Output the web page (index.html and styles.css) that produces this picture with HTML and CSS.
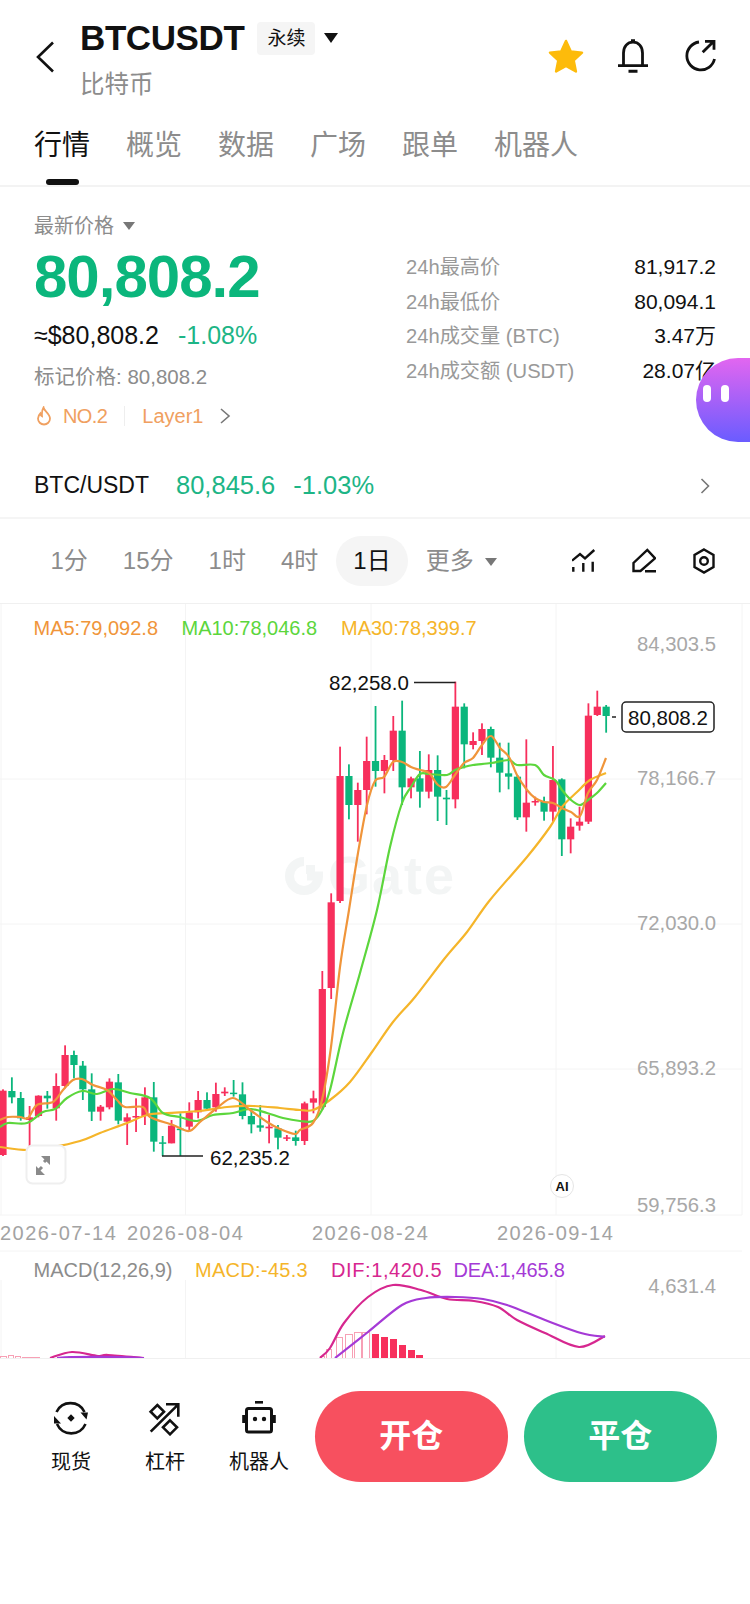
FILE: index.html
```html
<!DOCTYPE html>
<html lang="zh-CN">
<head>
  <meta charset="UTF-8">
  <meta name="viewport" content="width=device-width, initial-scale=1.0">
  <title>BTCUSDT</title>
  <link rel="stylesheet" href="styles.css">
</head>
<body>

  <div class="topBar">
    <svg class="backIcon" width="20" height="32" viewBox="0 0 20 32"><path d="M18 1.500 3 16l15 14.500" fill="none" stroke="#111" stroke-width="2.600"/></svg>
    <div class="titleBox">
      <div class="titleRow">
        <h1 class="symbol">BTCUSDT</h1>
        <span class="badge">永续</span>
        <span class="caret"></span>
      </div>
      <div class="subName">比特币</div>
    </div>
    <div class="topActions">
      <svg width="38" height="36" viewBox="0 0 38 36"><path d="M19 3l4.800 10.400 11.200 1.300-8.300 7.700 2.200 11.100L19 28l-9.900 5.500 2.200-11.100L3 14.700l11.200-1.300z" fill="#fdbb0b" stroke="#fdbb0b" stroke-width="2.500" stroke-linejoin="round"/></svg>
      <svg width="32" height="36" viewBox="0 0 32 36"><path d="M6.500 27.500V15C6.500 8.500 10.500 4.200 16 4.200S25.500 8.500 25.500 15v12.500M1 27.700h30" fill="none" stroke="#111" stroke-width="2.800"/><path d="M14 1.200h4v3h-4zM11.500 31.800h9v3h-9z" fill="#111"/></svg>
      <svg class="shareIcon" width="34" height="34" viewBox="0 0 34 34"><path d="M15 3A14 14 0 1 0 30.500 20M18.700 13.300 29.300 2.700M21 2.300h9v8.400" fill="none" stroke="#111" stroke-width="2.800"/></svg>
    </div>
  </div>

  <div class="tabs">
    <div class="tab on">行情<span class="tabLine"></span></div>
    <div class="tab">概览</div>
    <div class="tab">数据</div>
    <div class="tab">广场</div>
    <div class="tab">跟单</div>
    <div class="tab">机器人</div>
  </div>

  <div class="priceBox">
    <div class="priceLeft">
      <div class="priceLabel">最新价格<span class="caret small"></span></div>
      <div class="bigPrice">80,808.2</div>
      <div class="usdRow"><span>≈$80,808.2</span><span class="green">-1.08%</span></div>
      <div class="markPrice">标记价格: 80,808.2</div>
      <div class="rankRow">
        <svg width="18" height="20" viewBox="0 0 18 20"><path d="M8.500 1.500c.5 3.500 6.500 6 6.500 11a6 6 0 0 1-12 0c0-2.500 1.300-4 2.300-5 .2 1.500.8 2.300 1.700 2.700C6.700 7 7 4 8.500 1.500z" fill="none" stroke="#f0a060" stroke-width="1.800"/></svg>
        <span class="rankNo">NO.2</span>
        <span class="rankLine"></span>
        <span>Layer1</span>
        <svg class="rankArrow" width="12" height="16" viewBox="0 0 12 16"><path d="M2 1l8 7-8 7" fill="none" stroke="#777" stroke-width="1.600"/></svg>
      </div>
    </div>
    <ul class="stats">
      <li><span>24h最高价</span><b>81,917.2</b></li>
      <li><span>24h最低价</span><b>80,094.1</b></li>
      <li><span>24h成交量 (BTC)</span><b>3.47万</b></li>
      <li><span>24h成交额 (USDT)</span><b>28.07亿</b></li>
    </ul>
    <div class="bubble"><i></i><i></i></div>
  </div>

  <div class="pairRow">
    <span class="pairName">BTC/USDT</span>
    <span class="green">80,845.6</span>
    <span class="green">-1.03%</span>
    <svg class="pairArrow" width="10" height="16" viewBox="0 0 10 16"><path d="M1.500 1l7 7-7 7" fill="none" stroke="#777" stroke-width="1.600"/></svg>
  </div>

  <div class="periods">
    <span class="period">1分</span>
    <span class="period">15分</span>
    <span class="period">1时</span>
    <span class="period">4时</span>
    <span class="period on">1日</span>
    <span class="period">更多<span class="caret small"></span></span>
    <div class="tools">
      <svg width="24" height="26" viewBox="0 0 24 26"><path d="M0 12.700 8 6l5 4.300L22.300 2" fill="none" stroke="#111" stroke-width="2.400"/><path d="M1.300 19v4.700M11.300 15v8.700M20.700 13.700v10" fill="none" stroke="#111" stroke-width="2.400"/></svg>
      <svg width="24" height="26" viewBox="0 0 24 26"><path d="M1.500 23v-8L15.300 2l7.700 8.300L8.500 23zM13 23.300h11" fill="none" stroke="#111" stroke-width="2.400"/></svg>
      <svg width="24" height="26" viewBox="0 0 24 26"><path d="M12 1.500l9.500 5.500v12L12 24.500 2.500 19V7z" fill="none" stroke="#111" stroke-width="2.400"/><circle cx="12" cy="13" r="3.800" fill="none" stroke="#111" stroke-width="2.400"/></svg>
    </div>
  </div>

  <!-- 차트: 좌표는 페이지 기준 -->
  <svg class="chart" id="chart" width="750" height="754" viewBox="0 604 750 754">
    <g class="grid">
      <path d="M0 779H742M0 924H742M0 1069H742M0 1215H742M1 604V1215M185.500 604V1215M371 604V1215M556 604V1215M742 604V1215M0 1251H742M185.500 1280V1358M371 1280V1358M556 1280V1358M1 1280V1358"/>
    </g>
    <g class="mark">
      <path d="M304 861.500A14.500 14.500 0 1 0 318.500 876H307"/>
      <rect x="306" y="865" width="9" height="9"/>
    </g>
    <text class="markText" x="328" y="894">Gate</text>

    <g id="bars"></g>
    <g id="candles"></g>
    <g id="lines"></g>

    <path class="leader" d="M414 682.500H455.500M162 1156H203"/>
    <text class="tag" x="329" y="690">82,258.0</text>
    <text class="tag" x="210" y="1165">62,235.2</text>

    <path class="leader" d="M612 717h4"/>
    <rect class="lastBox" x="622" y="702" width="92" height="30" rx="4"/>
    <text class="tag" x="628" y="724.500">80,808.2</text>

    <text class="axis" x="716" y="651">84,303.5</text>
    <text class="axis" x="716" y="785">78,166.7</text>
    <text class="axis" x="716" y="930">72,030.0</text>
    <text class="axis" x="716" y="1075">65,893.2</text>
    <text class="axis" x="716" y="1212">59,756.3</text>
    <text class="axis" x="716" y="1293">4,631.4</text>

    <text class="maText c1" x="33.500" y="635">MA5:79,092.8</text>
    <text class="maText c2" x="181.500" y="635">MA10:78,046.8</text>
    <text class="maText c3" x="341" y="635">MA30:78,399.7</text>

    <text class="date" x="0" y="1240">2026-07-14</text>
    <text class="date" x="127" y="1240">2026-08-04</text>
    <text class="date" x="312" y="1240">2026-08-24</text>
    <text class="date" x="497" y="1240">2026-09-14</text>

    <text class="maText grey" x="33.500" y="1277">MACD(12,26,9)</text>
    <text class="maText c3 wide" x="195" y="1277">MACD:-45.3</text>
    <text class="maText c4 wide2" x="331" y="1277">DIF:1,420.5</text>
    <text class="maText c5 tight" x="453.500" y="1277">DEA:1,465.8</text>

    <rect class="expandBox" x="26.500" y="1145.500" width="39" height="38" rx="6"/>
    <path class="expand" d="M37 1172l5-5M49 1157l-5 5"/>
    <path class="expandTip" d="M36 1166v9h9zM50 1156h-9l9 9z"/>

    <circle class="aiBox" cx="562" cy="1186" r="11.500"/>
    <text class="aiText" x="562" y="1191">AI</text>
  </svg>

  <div class="bottomBar">
    <div class="tool">
      <svg width="36" height="36" viewBox="0 0 36 36"><path d="M3.500 12A15.500 15.500 0 0 1 31.500 12M32.500 24A15.500 15.500 0 0 1 4 24" fill="none" stroke="#111" stroke-width="2.600"/><path d="M27.500 12.500h7.500l-1.500 7zM1 16l7 7.500H1zM18 14.300l3.700 3.700-3.700 3.700-3.700-3.700z" fill="#111"/></svg>
      <span>现货</span>
    </div>
    <div class="tool">
      <svg width="36" height="36" viewBox="0 0 36 36"><path d="M3.700 31.700 31.300 4.300M19 4.300h12.300v12.400" fill="none" stroke="#111" stroke-width="2.600"/><path d="M10.300 5l6.700 6.700-6.700 6.700-6.700-6.700zM23 20.300l7 7-7 7-7-7z" fill="none" stroke="#111" stroke-width="2.600"/></svg>
      <span>杠杆</span>
    </div>
    <div class="tool">
      <svg width="36" height="36" viewBox="0 0 36 36"><path d="M14 2.300h8" stroke="#111" stroke-width="2.600"/><rect x="5.500" y="8.500" width="25" height="23.500" rx="2" fill="none" stroke="#111" stroke-width="3"/><path d="M2.700 15v8M33.300 15v8" stroke="#111" stroke-width="3"/><circle cx="14" cy="19" r="2.200" fill="#111"/><circle cx="23" cy="19" r="2.200" fill="#111"/></svg>
      <span>机器人</span>
    </div>
    <div class="bigBtn red">开仓</div>
    <div class="bigBtn teal">平仓</div>
  </div>

  <script src="chart.js"></script>
</body>
</html>
```

FILE: styles.css
```css
* {
  box-sizing: border-box;
}
html, body {
  margin: 0;
  padding: 0;
}
body {
  width: 750px;
  height: 1604px;
  overflow: hidden;
  background: #fff;
  color: #111;
  font-family: "Liberation Sans", "Noto Sans CJK SC", sans-serif;
}
ul, li {
  list-style: none;
  margin: 0;
  padding: 0;
}
.green {
  color: #1db586;
}
.caret {
  display: inline-block;
  border-left: 7.5px solid transparent;
  border-right: 7.5px solid transparent;
  border-top: 10px solid #111;
}
.caret.small {
  border-left-width: 6.5px;
  border-right-width: 6.5px;
  border-top: 8px solid #777;
  margin-left: 9px;
  vertical-align: 3px;
}

/* header */
.topBar {
  display: flex;
  height: 120px;
  padding: 18px 32px 0 35px;
}
.backIcon {
  margin: 23px 25px 0 0;
}
.titleRow {
  display: flex;
  align-items: center;
  height: 40px;
}
.symbol {
  margin: 0;
  font-size: 35px;
  line-height: 40px;
  font-weight: 700;
  letter-spacing: -0.4px;
}
.badge {
  width: 58px;
  height: 33px;
  margin-left: 13px;
  border-radius: 4px;
  background: #f5f5f5;
  font-size: 19px;
  line-height: 33px;
  text-align: center;
}
.titleRow .caret {
  margin-left: 9px;
}
.subName {
  margin-top: 12px;
  font-size: 24.5px;
  line-height: 30px;
  color: #8c8c8c;
}
.topActions {
  display: flex;
  align-items: center;
  gap: 32px;
  height: 36px;
  margin: 20px 0 0 auto;
}
.shareIcon {
  margin-left: 3px;
}

.tabs {
  display: flex;
  gap: 36px;
  height: 67px;
  padding: 6px 0 0 34px;
  border-bottom: 2px solid #f3f3f3;
}
.tab {
  display: flex;
  flex-direction: column;
  align-items: center;
  font-size: 28px;
  line-height: 40px;
  color: #8c8c8c;
}
.tab.on {
  color: #111;
}
.tabLine {
  width: 33px;
  height: 6px;
  margin-top: 13px;
  border-radius: 3px;
  background: #111;
}

/* price */
.priceBox {
  position: relative;
  display: flex;
  justify-content: space-between;
  height: 267px;
  padding: 25px 34px 0;
}
.priceLabel {
  font-size: 20px;
  line-height: 28px;
  color: #8c8c8c;
}
.bigPrice {
  margin-top: 7px;
  font-size: 60px;
  line-height: 60px;
  font-weight: 700;
  letter-spacing: -1px;
  color: #0bb67c;
}
.usdRow {
  display: flex;
  gap: 19px;
  margin-top: 13px;
  font-size: 25px;
  line-height: 30px;
}
.markPrice {
  margin-top: 13px;
  font-size: 20.5px;
  line-height: 28px;
  color: #8c8c8c;
}
.rankRow {
  display: flex;
  align-items: center;
  height: 28px;
  margin-top: 11px;
  font-size: 20px;
  color: #f0a060;
}
.rankRow svg {
  margin-left: 1px;
}
.rankNo {
  margin-left: 10px;
  letter-spacing: -0.6px;
}
.rankLine {
  width: 1px;
  height: 20px;
  margin: 0 17px;
  background: #eee;
}
.rankRow .rankArrow {
  margin-left: 16px;
}
.stats {
  width: 310px;
  margin-top: 38px;
}
.stats li {
  display: flex;
  justify-content: space-between;
  height: 34.7px;
  font-size: 20.2px;
  line-height: 34.7px;
  color: #999;
}
.stats b {
  font-size: 21px;
  font-weight: 400;
  color: #111;
}
.bubble {
  position: absolute;
  top: 171px;
  right: 0;
  display: flex;
  gap: 10px;
  width: 54px;
  height: 84px;
  padding: 27px 0 0 7px;
  border-radius: 42px 0 0 42px;
  background: linear-gradient(#e266f0, #6a5cff);
}
.bubble i {
  width: 8px;
  height: 17px;
  border-radius: 4px;
  background: #fff;
}
.pairRow {
  display: flex;
  align-items: center;
  height: 65px;
  padding: 0 40px 0 34px;
  border-bottom: 2px solid #f5f5f5;
  font-size: 25.5px;
}
.pairName {
  margin-right: 27px;
  font-size: 23px;
}
.pairRow .green + .green {
  margin-left: 18px;
}
.pairArrow {
  margin-left: auto;
}

/* periods */
.periods {
  display: flex;
  align-items: center;
  height: 85px;
  padding: 0 34px 0 33px;
  border-bottom: 1px solid #f0f0f0;
  font-size: 24px;
  color: #8c8c8c;
}
.period {
  height: 50px;
  padding: 0 17.5px;
  border-radius: 25px;
  line-height: 50px;
  white-space: nowrap;
}
.period .caret {
  margin-left: 11px;
}
.period.on {
  background: #f5f5f5;
  color: #111;
}
.tools {
  display: flex;
  align-items: center;
  gap: 36px;
  margin-left: auto;
}

/* chart */
.chart {
  display: block;
}
.grid path {
  fill: none;
  stroke: #f4f4f4;
  stroke-width: 1;
}
.mark path {
  fill: none;
  stroke: #f3f5f5;
  stroke-width: 9;
}
.mark rect {
  fill: #f3f5f5;
}
.markText {
  font-size: 54px;
  font-weight: 700;
  letter-spacing: 2px;
  fill: #f3f5f5;
}
.leader {
  fill: none;
  stroke: #222;
  stroke-width: 1.500;
}
.tag {
  font-size: 20.500px;
  fill: #111;
}
.lastBox {
  fill: #fff;
  stroke: #222;
  stroke-width: 1.500;
}
.axis {
  font-size: 20.300px;
  fill: #a8a8a8;
  text-anchor: end;
}
.maText {
  font-size: 20px;
}
.wide {
  letter-spacing: 0.3px;
}
.wide2 {
  letter-spacing: 0.6px;
}
.tight {
  letter-spacing: -0.2px;
}
.date {
  font-size: 20px;
  letter-spacing: 1.500px;
  fill: #a3a3a3;
}
.c1 { fill: #f0953a; }
.c2 { fill: #5cd63c; }
.c3 { fill: #f5b52a; }
.c4 { fill: #d6278f; }
.c5 { fill: #a53ad6; }
.grey { fill: #8c8c8c; }
.expandBox {
  fill: #fff;
  stroke: #efefef;
  stroke-width: 2;
}
.expand {
  fill: none;
  stroke: #8a8a8a;
  stroke-width: 3;
}
.expandTip {
  fill: #8a8a8a;
}
.aiBox {
  fill: #fff;
  stroke: #e5e5e5;
  stroke-width: 1;
}
.aiText {
  font-size: 13px;
  font-weight: 700;
  fill: #111;
  text-anchor: middle;
}

/* bottom */
.bottomBar {
  display: flex;
  align-items: flex-start;
  height: 246px;
  padding: 32px 0 0 24px;
  border-top: 1px solid #f0f0f0;
}
.tool {
  display: flex;
  flex-direction: column;
  align-items: center;
  width: 94px;
  padding-top: 9px;
  font-size: 20px;
  line-height: 26px;
}
.tool span {
  margin-top: 13px;
}
.bigBtn {
  width: 192.500px;
  height: 91px;
  border-radius: 46px;
  color: #fff;
  font-size: 32px;
  font-weight: 700;
  line-height: 91px;
  text-align: center;
}
.bigBtn.red {
  margin-left: 9px;
  background: #f7505f;
}
.bigBtn.teal {
  margin-left: 16.500px;
  background: #2dc08a;
}
```

FILE: chart.js
```js
// 캔들 [wick top, body top, body bottom, wick bottom, 0=red 1=green]
// 값은 3배 확대 기준, base 에서 시작
var NS = "http://www.w3.org/2000/svg";
var RED = "#f72f5c";
var GREEN = "#0bb67c";

var leftBase = 1030;
var leftData = [
  [178,182,375,378,0],[142,183,202,220,1],[186,204,265,272,1],[228,262,270,378,0],
  [196,197,258,262,0],[183,197,205,236,1],[130,168,235,272,0],[46,75,168,175,0],
  [62,75,105,145,1],[93,107,178,210,1],[130,178,245,273,1],[225,230,245,272,0],
  [145,155,232,238,0],[132,157,272,283,1],[250,262,275,345,0],[205,258,262,306,0],
  [172,202,258,285,0],[156,202,335,365,1],[318,337,341,378,1],[270,287,340,340,0],
  [250,296,298,378,1],[217,247,290,300,0],[183,210,247,265,0],[187,210,236,240,1],
  [158,192,232,245,0],[172,185,190,198,0],[150,188,192,200,1],[157,193,258,268,1],
  [235,258,283,310,1],[225,286,293,305,1],[255,290,295,340,0],[285,295,323,358,1],
  [315,322,326,333,0],[302,322,333,347,1],[215,220,333,345,0],[182,205,218,250,0],
  [-177,-123,231,240,0]
];

var rightBase = 660;
var rightData = [
  [700,727,984,1017,0],[260,348,723,729,0],[313,348,435,478,1],[368,390,435,545,0],
  [230,303,390,463,0],[138,303,333,380,1],[285,300,333,400,0],[168,212,300,333,0],
  [122,212,382,435,1],[350,355,382,415,0],[273,355,395,443,1],[283,330,395,415,0],
  [286,330,410,483,1],[390,413,418,495,1],[65,140,418,445,0],[130,140,253,325,1],
  [217,243,255,268,0],[190,207,243,285,0],[200,207,293,322,1],[248,293,338,397,1],
  [248,340,350,388,1],[345,350,472,480,1],[238,428,472,515,0],[410,423,427,437,0],
  [410,425,455,482,1],[258,360,455,485,0],[355,358,538,588,1],[475,500,538,580,0],
  [440,485,497,512,0],[130,167,485,492,0],[92,140,165,168,0],[135,140,168,218,1]
];

// 이평선 [page x, page y]
var ma5 = [[0,1120],[8,1117],[20,1117],[28,1118],[37,1105],[53,1102],[63,1090],[73,1080],[82,1079],[93,1085],[107,1090],[117,1100],[125,1107],[143,1107],[150,1117],[173,1125],[189,1131],[200,1122],[217,1108],[233,1098],[250,1110],[267,1122],[280,1129],[295,1134],[300,1130],[313,1123],[322,1100],[331,1047],[340,967],[349,910],[358,853],[367,805],[375,781],[384,777],[393,762],[402,762],[411,767],[420,770],[429,773],[438,785],[446,787],[455,775],[464,763],[473,758],[482,745],[491,736],[500,748],[509,757],[517,775],[527,790],[535,798],[544,802],[553,803],[562,808],[571,812],[580,816],[588,793],[597,780],[606,758]];
var ma10 = [[0,1127],[8,1123],[27,1123],[43,1112],[55,1109],[67,1098],[82,1091],[97,1094],[113,1089],[130,1093],[150,1098],[163,1113],[180,1117],[197,1121],[213,1115],[233,1113],[250,1109],[267,1113],[283,1118],[300,1121],[313,1121],[322,1110],[330,1090],[343,1033],[360,973],[377,910],[390,847],[402,803],[411,787],[420,774],[429,774],[447,775],[455,770],[464,767],[473,765],[491,763],[509,760],[517,765],[535,765],[544,775],[555,780],[562,790],[571,800],[580,805],[588,800],[597,793],[606,783]];
var ma30 = [[0,1147],[27,1150],[53,1147],[80,1141],[100,1133],[127,1123],[147,1115],[167,1113],[200,1111],[227,1107],[253,1106],[280,1108],[300,1110],[313,1110],[330,1100],[350,1082],[372,1052],[393,1022],[415,997],[445,958],[467,932],[490,900],[527,857],[550,827],[562,807],[577,792],[590,780],[606,773]];

// MACD 막대 [x, width, top, 0=hollow 1=solid]
var macdBars = [
  [0,7,1356,0],[8,6,1355,0],[15,6,1356,0],[22,6,1357,0],[28,6,1357,0],[34,6,1357,0],
  [68,7,1356,0],[320,5,1356,0],[326,6,1349,0],[336,7,1337,0],[345,8,1334,0],[354,8,1332,0],[362,8,1332,0],
  [372,7,1334,1],[381,7,1337,1],[390,7,1339,1],[399,7,1345,1],[408,7,1350,1],[416,7,1355,1]
];
var dif = [[50,1358],[72,1352],[98,1356],[108,1355],[144,1358]];
var dea = [[57,1358],[72,1357],[120,1357],[144,1358]];
var difR = [[320,1358],[330,1348],[344,1323],[368,1297],[393,1285],[421,1290],[447,1299],[474,1301],[498,1307],[517,1320],[545,1333],[579,1347],[605,1336]];
var deaR = [[335,1358],[368,1332],[402,1305],[426,1298],[455,1297],[483,1299],[507,1305],[545,1320],[581,1333],[605,1337]];

function el(name, attrs, parent){
  var node = document.createElementNS(NS, name);
  for(var k in attrs){
    node.setAttribute(k, attrs[k]);
  }
  parent.appendChild(node);
  return node;
}

function drawCandle(parent, x, base, c){
  var color = c[4] ? GREEN : RED;
  var top = base + c[0] / 3;
  var bottom = base + c[3] / 3;
  el("rect", {x: x - 0.9, y: top, width: 1.8, height: bottom - top, fill: color}, parent);
  var h = Math.max((c[2] - c[1]) / 3, 1.5);
  el("rect", {x: x - 3.6, y: base + c[1] / 3, width: 7.2, height: h, fill: color}, parent);
}

// 꺾이지 않게 곡선으로 연결
function drawLine(parent, pts, color){
  var d = "M" + pts[0][0] + " " + pts[0][1];
  for(var i = 0; i < pts.length - 1; i++){
    var p0 = pts[i - 1] || pts[i];
    var p1 = pts[i];
    var p2 = pts[i + 1];
    var p3 = pts[i + 2] || p2;
    d += "C" + (p1[0] + (p2[0] - p0[0]) / 6) + " " + (p1[1] + (p2[1] - p0[1]) / 6);
    d += " " + (p2[0] - (p3[0] - p1[0]) / 6) + " " + (p2[1] - (p3[1] - p1[1]) / 6);
    d += " " + p2[0] + " " + p2[1];
  }
  el("path", {d: d, fill: "none", stroke: color, "stroke-width": 2.2}, parent);
}

(function (){
  var candles = document.getElementById("candles");
  var lines = document.getElementById("lines");
  var bars = document.getElementById("bars");
  var i;

  for(i = 0; i < leftData.length; i++){
    drawCandle(candles, 3 + 8.87 * i, leftBase, leftData[i]);
  }
  for(i = 0; i < rightData.length; i++){
    drawCandle(candles, 3 + 8.87 * (i + leftData.length), rightBase, rightData[i]);
  }

  drawLine(lines, ma30, "#f5b52a");
  drawLine(lines, ma10, "#5cd63c");
  drawLine(lines, ma5, "#f0953a");

  for(i = 0; i < macdBars.length; i++){
    var b = macdBars[i];
    el("rect", {
      x: b[0] + 0.5,
      y: b[2] + 0.5,
      width: b[1] - 1,
      height: 1358 - b[2],
      fill: b[3] ? RED : "#fff",
      stroke: b[3] ? RED : "#f7a0b5"
    }, bars);
  }
  drawLine(bars, dif, "#d6278f");
  drawLine(bars, dea, "#a53ad6");
  drawLine(bars, difR, "#d6278f");
  drawLine(bars, deaR, "#a53ad6");
})();
```
